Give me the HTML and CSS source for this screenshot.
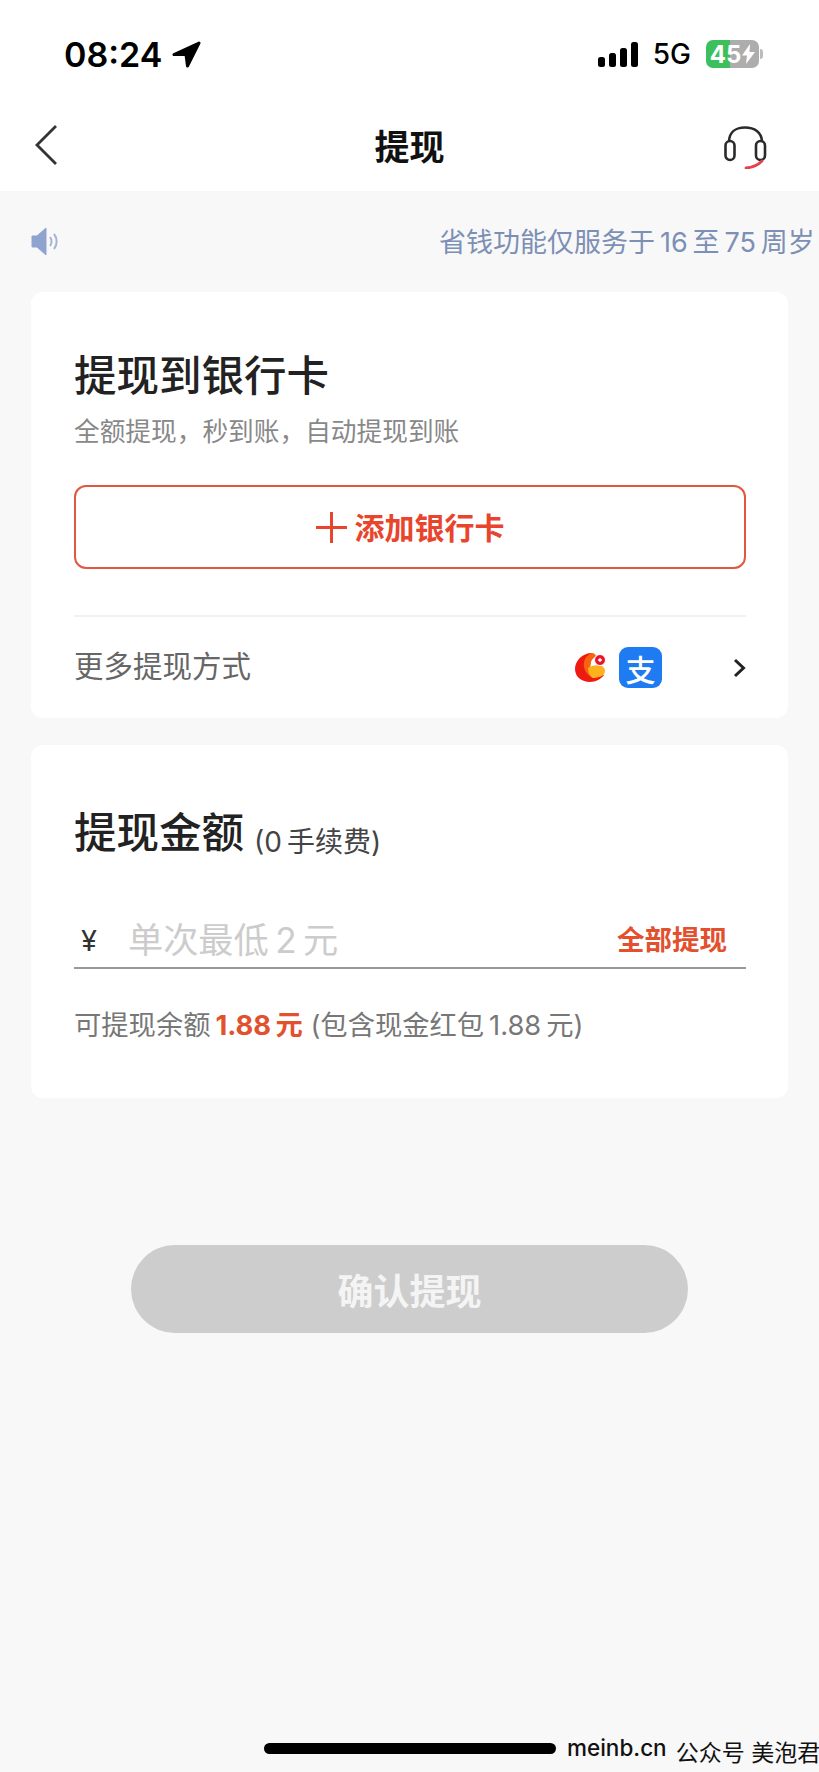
FILE: index.html
```html
<!DOCTYPE html>
<html lang="zh-CN">
<head>
    <meta charset="UTF-8">
    <meta name="viewport" content="width=device-width, initial-scale=1.0">
    <title>提现</title>
    <link rel="stylesheet" href="styles.css">
</head>
<body>
    <div class="page">
        <header class="top">
            <div class="status-bar">
                <div class="status-left">
                    <span class="time">08:24</span>
                    <svg class="location" width="29" height="27" viewBox="0 0 29 27"><path d="M27 2 2 13.500h12l1.500 11.500z" fill="#000" stroke="#000" stroke-width="3" stroke-linejoin="round"/></svg>
                </div>
                <div class="status-right">
                    <svg width="40" height="25" viewBox="0 0 40 25"><rect x="0" y="15" width="7" height="10" rx="2.500"/><rect x="11" y="11" width="7" height="14" rx="2.500"/><rect x="22" y="6" width="7" height="19" rx="2.500"/><rect x="33" y="0" width="7" height="25" rx="2.500"/></svg>
                    <span class="network">5G</span>
                    <div class="battery">
                        <span>45</span>
                        <svg width="13" height="20" viewBox="0 0 13 20"><path d="M8 0 0 11.500h5L4 20l9-12H7.500z" fill="#fff"/></svg>
                    </div>
                </div>
            </div>
            <nav class="nav">
                <svg class="back" width="24" height="42" viewBox="0 0 24 42"><path d="M22 2 3 21l19 19" fill="none" stroke="#333" stroke-width="2.800"/></svg>
                <h1>提现</h1>
                <svg class="headset" width="43" height="43" viewBox="0 0 43 43">
                    <path d="M5 16C5 6 12 1.500 21 1.500S38 6 38 16" fill="none" stroke="#2a2a2a" stroke-width="2.600"/>
                    <rect x="1.500" y="15" width="9" height="19" rx="4.500" fill="none" stroke="#2a2a2a" stroke-width="2.600"/>
                    <rect x="32" y="15" width="9" height="19" rx="4.500" fill="none" stroke="#2a2a2a" stroke-width="2.600"/>
                    <path d="M22 42c7-.5 12-3 16-7" fill="none" stroke="#e5404f" stroke-width="2.800" stroke-linecap="round"/>
                </svg>
            </nav>
        </header>

        <div class="notice">
            <svg class="speaker" width="28" height="29" viewBox="0 0 28 29">
                <path d="M1 9h5l9-8v27l-9-8H1z" fill="#8fa3cf" stroke="#8fa3cf" stroke-linejoin="round"/>
                <path d="M19 10c2 2.500 2 6.500 0 9M23 7c3.500 4 3.500 11 0 15" fill="none" stroke="#a4b4d6" stroke-width="2"/>
            </svg>
            <span class="notice-text">省钱功能仅服务于&#8201;16&#8201;至&#8201;75&#8201;周岁</span>
        </div>

        <section class="card">
            <h2 class="card-title">提现到银行卡</h2>
            <p class="card-sub">全额提现，秒到账，自动提现到账</p>
            <button class="add-card">
                <svg width="31" height="31" viewBox="0 0 31 31"><path d="M0 15.500h31M15.500 0v31" stroke="#e8452c" stroke-width="3"/></svg>
                <span>添加银行卡</span>
            </button>
            <div class="more-row">
                <span class="more-label">更多提现方式</span>
                <div class="more-icons">
                    <svg width="31" height="29" viewBox="0 0 31 29">
                        <path d="M17 0C7 0 0 8 0 16c0 8 7 13 15 13 6 0 11-3 14-7L15 15z" fill="#ee1c10"/>
                        <path d="M17 0c-6 2-9 8-8 14 1 5 4 8 7 10l-1-10c0-5 2-8 6-11-1-2-2-3-4-3z" fill="#f9620f"/>
                        <path d="M13 15c5-4 17-4 17 3 0 5-7 7-12 7-3-1-5-6-5-10z" fill="#fbb21c"/>
                        <circle cx="25" cy="7" r="5.500" fill="#e8142a" stroke="#fff"/>
                        <path d="M23 7h4M25 5v4" stroke="#fff" stroke-width="1.300"/>
                    </svg>
                    <span class="alipay">支</span>
                </div>
                <svg class="more-arrow" width="13" height="20" viewBox="0 0 13 20"><path d="M2 2l8.500 8L2 18" fill="none" stroke="#222" stroke-width="3"/></svg>
            </div>
        </section>

        <section class="card card-amount">
            <div class="amount-head">
                <h2 class="card-title">提现金额</h2>
                <span class="fee">(0&#8201;手续费)</span>
            </div>
            <div class="amount-input">
                <span class="yen">¥</span>
                <span class="placeholder">单次最低&#8201;2&#8201;元</span>
                <span class="withdraw-all">全部提现</span>
            </div>
            <p class="balance">可提现余额&#8201;<b>1.88&#8201;元</b> (包含现金红包&#8201;1.88&#8201;元)</p>
        </section>

        <button class="confirm">确认提现</button>

        <footer class="bottom">
            <div class="home-bar"></div>
            <div class="watermark"><b>meinb.cn</b><span>公众号 美泡君</span></div>
        </footer>
    </div>
</body>
</html>
```

FILE: styles.css
```css
* {
    box-sizing: border-box;
}

body {
    margin: 0;
    background-color: #f8f8f8;
    font-family: Inter, "Noto Sans CJK SC", sans-serif;
}

.page {
    display: flex;
    flex-direction: column;
    height: 1772px;
    overflow: hidden;
}

/* Top area */
.top {
    flex: none;
    height: 191px;
    padding-top: 36px;
    background-color: #fff;
}

.status-bar {
    display: flex;
    justify-content: space-between;
    align-items: center;
    height: 36px;
    padding: 0 56px 0 64px;
}

.status-left,
.status-right {
    display: flex;
    align-items: center;
}

.time {
    font-size: 34px;
    font-weight: 600;
    color: #000;
}

.location {
    margin-left: 10px;
}

.network {
    margin: 0 15px;
    font-size: 28px;
    font-weight: 500;
    color: #000;
}

.battery {
    display: flex;
    justify-content: center;
    align-items: center;
    gap: 1px;
    width: 53px;
    height: 28px;
    margin-right: 4px;
    border-radius: 7px;
    background: linear-gradient(90deg, #3dc05c 24px, #adadad 24px);
    color: #fff;
    font-size: 24px;
    font-weight: 700;
    position: relative;
}

.battery::after {
    content: "";
    position: absolute;
    left: 54px;
    top: 9px;
    width: 3px;
    height: 10px;
    border-radius: 0 3px 3px 0;
    background-color: #bbb;
}

.nav {
    display: grid;
    grid-template-columns: 1fr auto 1fr;
    align-items: center;
    height: 44px;
    margin-top: 47px;
    padding: 0 34px;
}

.nav h1 {
    margin: 0;
    font-size: 35px;
    font-weight: 700;
    color: #111;
}

.headset {
    justify-self: end;
    margin: 6px 18px 0 0;
}

/* Notice */
.notice {
    display: flex;
    align-items: center;
    flex: none;
    height: 101px;
    padding-left: 31px;
    white-space: nowrap;
}

.speaker {
    flex: none;
}

.notice-text {
    flex: none;
    margin: 0 0 2px 380px;
    font-size: 27px;
    color: #7c8fb5;
}

/* Cards */
.card {
    flex: none;
    margin: 0 31px;
    padding: 59px 42px 0 43px;
    height: 426px;
    border-radius: 12px;
    background-color: #fff;
}

.card-title {
    margin: 0;
    font-size: 42.500px;
    line-height: 50px;
    font-weight: 500;
    color: #222;
}

.card-sub {
    margin: 14px 0 0;
    font-size: 25.700px;
    line-height: 34px;
    color: #888;
}

.add-card {
    display: flex;
    justify-content: center;
    align-items: center;
    gap: 8px;
    width: 100%;
    height: 84px;
    margin-top: 36px;
    border: 2px solid #e2583e;
    border-radius: 12px;
    background-color: #fff;
    font-family: inherit;
    font-size: 30px;
    font-weight: 700;
    color: #e8452c;
}

.add-card span {
    margin-bottom: 3px;
}

.more-row {
    display: flex;
    align-items: center;
    height: 103px;
    margin-top: 46px;
    border-top: 2px solid #f1f1f1;
}

.more-label {
    flex: 1;
    margin-bottom: 8px;
    font-size: 29.500px;
    color: #666;
}

.more-icons {
    display: flex;
    align-items: center;
    gap: 13px;
}

.alipay {
    display: flex;
    justify-content: center;
    align-items: center;
    width: 43px;
    height: 41px;
    border-radius: 9px;
    background-color: #1e7bf2;
    color: #fff;
    font-size: 30px;
    font-weight: 500;
}

.more-arrow {
    margin-left: 71px;
}

.card-amount {
    height: 353px;
    margin-top: 27px;
    padding-top: 63px;
}

.amount-head {
    display: flex;
    align-items: flex-end;
    gap: 10px;
}

.fee {
    font-size: 28px;
    line-height: 32px;
    color: #444;
}

.amount-input {
    display: flex;
    align-items: center;
    height: 65px;
    margin-top: 46px;
    padding-top: 4px;
    border-bottom: 2px solid #999;
}

.yen {
    width: 54px;
    margin-top: 5px;
    padding-left: 7px;
    font-size: 29px;
    color: #333;
}

.placeholder {
    flex: 1;
    font-size: 35.200px;
    color: #ccc;
}

.withdraw-all {
    margin-right: 19px;
    font-size: 27.500px;
    font-weight: 700;
    color: #e2502e;
}

.balance {
    margin: 37px 0 0;
    font-size: 27.300px;
    line-height: 40px;
    color: #777;
}

.balance b {
    font-weight: 700;
    color: #e2502e;
}

.confirm {
    flex: none;
    width: 557px;
    height: 88px;
    margin: 147px 0 0 131px;
    border: none;
    border-radius: 44px;
    background-color: #cdcdcd;
    font-family: inherit;
    font-size: 36px;
    font-weight: 700;
    color: #f4f4f4;
}

/* Bottom */
.bottom {
    display: flex;
    align-items: center;
    gap: 11px;
    margin-top: auto;
    padding: 0 0 4px 264px;
    white-space: nowrap;
}

.home-bar {
    flex: none;
    width: 292px;
    height: 11px;
    margin-bottom: 6px;
    border-radius: 6px;
    background-color: #000;
}

.watermark {
    display: flex;
    gap: 9px;
    font-size: 22.500px;
    color: #111;
}

.watermark b {
    font-weight: 500;
}

.watermark span {
    font-size: 23px;
}
```
